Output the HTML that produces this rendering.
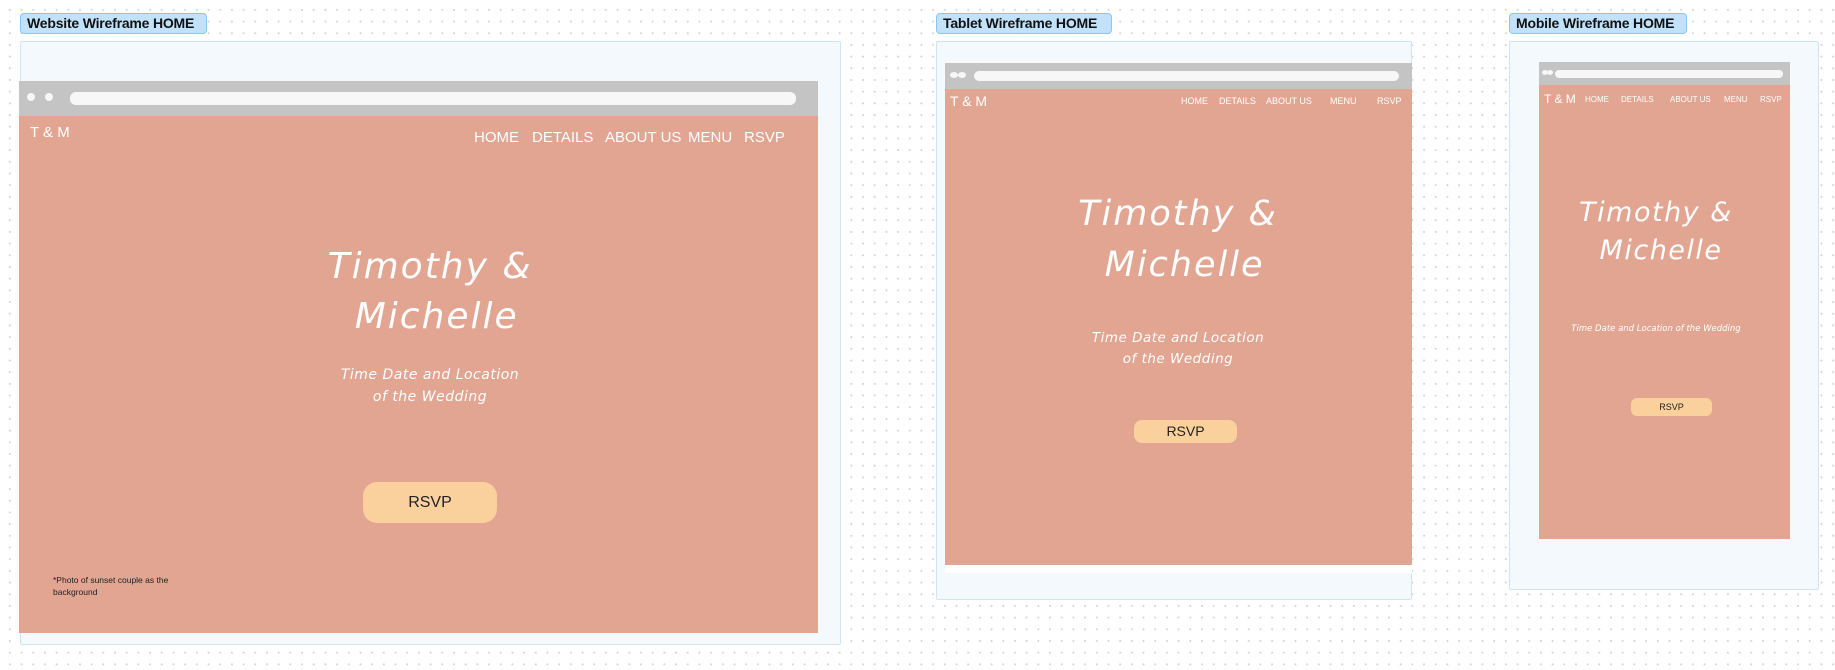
<!DOCTYPE html>
<html><head><meta charset="utf-8"><style>
*{margin:0;padding:0;box-sizing:border-box}
body{width:1835px;height:670px;overflow:hidden;position:relative;background:#fff;
background-image:radial-gradient(circle,#d4d4d4 0.8px,transparent 1.2px);background-size:11.7px 11.7px;background-position:4px 4px;
font-family:"Liberation Sans",sans-serif}
.a{position:absolute}
.frame{position:absolute;background:#f4f9fe;border:1px solid #cfe5f6;border-radius:2px}
.label{position:absolute;background:#c2e1fa;border:1px solid #8fc4ec;border-radius:4px;font-size:14px;color:#111;height:21px;line-height:19px;padding-left:6px;font-weight:bold;letter-spacing:-0.2px}
.bar{position:absolute;background:#c4c4c4}
.pink{position:absolute;background:#e1a592}
.url{position:absolute;background:#f7f7f7;border-radius:6px}
.dot{position:absolute;background:#f7f7f7;border-radius:50%}
.w{position:absolute;color:#fff;white-space:nowrap}
.s{position:absolute;color:#fff;font-style:italic;text-align:center;white-space:nowrap;font-family:"DejaVu Sans","Liberation Sans",sans-serif;font-weight:normal}
.btn{position:absolute;background:#fad09c;color:#222;text-align:center}
</style></head><body>

<!-- Website -->
<div class="label" style="left:20px;top:13px;width:187px">Website Wireframe HOME</div>
<div class="frame" style="left:20px;top:41px;width:821px;height:604px"></div>
<div class="bar" style="left:19px;top:81px;width:799px;height:35px"></div>
<div class="dot" style="left:27px;top:93px;width:8px;height:8px"></div>
<div class="dot" style="left:45px;top:93px;width:8px;height:8px"></div>
<div class="url" style="left:70px;top:92px;width:726px;height:13px"></div>
<div class="pink" style="left:19px;top:116px;width:799px;height:517px"></div>
<div class="w" style="left:30px;top:124px;font-size:15px">T &amp; M</div>
<div class="w" style="left:474px;top:129px;font-size:15px">HOME</div>
<div class="w" style="left:532px;top:129px;font-size:15px">DETAILS</div>
<div class="w" style="left:605px;top:129px;font-size:15px">ABOUT US</div>
<div class="w" style="left:688px;top:129px;font-size:15px">MENU</div>
<div class="w" style="left:744px;top:129px;font-size:15px">RSVP</div>
<div class="s" style="left:300px;top:242px;width:260px;font-size:36px;line-height:50px;letter-spacing:2px">Timothy &amp;<br>&nbsp;Michelle</div>
<div class="s" style="left:300px;top:364px;width:260px;font-size:14px;line-height:22px;letter-spacing:0.5px">Time Date and Location<br>of the Wedding</div>
<div class="btn" style="left:363px;top:482px;width:134px;height:41px;border-radius:14px;font-size:16px;line-height:41px">RSVP</div>
<div class="a" style="left:53px;top:574px;font-size:8.5px;line-height:12px;color:#222">*Photo of sunset couple as the<br>background</div>

<!-- Tablet -->
<div class="label" style="left:936px;top:13px;width:176px">Tablet Wireframe HOME</div>
<div class="frame" style="left:936px;top:41px;width:476px;height:559px"></div>
<div class="bar" style="left:945px;top:63px;width:467px;height:26px"></div>
<div class="dot" style="left:950px;top:72px;width:8px;height:6px"></div>
<div class="dot" style="left:958px;top:72px;width:8px;height:6px"></div>
<div class="url" style="left:974px;top:71px;width:425px;height:10px"></div>
<div class="pink" style="left:945px;top:89px;width:467px;height:476px"></div>
<div class="a" style="left:945px;top:565px;width:467px;height:8px;background:#fff"></div>
<div class="w" style="left:950px;top:93px;font-size:14px">T &amp; M</div>
<div class="w" style="left:1181px;top:96px;font-size:9px">HOME</div>
<div class="w" style="left:1219px;top:96px;font-size:9px">DETAILS</div>
<div class="w" style="left:1266px;top:96px;font-size:9px">ABOUT US</div>
<div class="w" style="left:1330px;top:96px;font-size:9px">MENU</div>
<div class="w" style="left:1377px;top:96px;font-size:9px">RSVP</div>
<div class="s" style="left:1048px;top:189px;width:260px;font-size:35px;line-height:51px;letter-spacing:2px">Timothy &amp;<br>&nbsp;Michelle</div>
<div class="s" style="left:1048px;top:328px;width:260px;font-size:13.5px;line-height:21px;letter-spacing:0.5px">Time Date and Location<br>of the Wedding</div>
<div class="btn" style="left:1134px;top:420px;width:103px;height:23px;border-radius:8px;font-size:14px;line-height:23px">RSVP</div>

<!-- Mobile -->
<div class="label" style="left:1509px;top:13px;width:178px">Mobile Wireframe HOME</div>
<div class="frame" style="left:1509px;top:41px;width:310px;height:549px"></div>
<div class="bar" style="left:1539px;top:62px;width:251px;height:23px"></div>
<div class="dot" style="left:1542px;top:70px;width:6px;height:5px"></div>
<div class="dot" style="left:1547px;top:70px;width:6px;height:5px"></div>
<div class="url" style="left:1555px;top:70px;width:228px;height:8px"></div>
<div class="pink" style="left:1539px;top:85px;width:251px;height:454px"></div>
<div class="w" style="left:1544px;top:92px;font-size:12px">T &amp; M</div>
<div class="w" style="left:1585px;top:95px;font-size:8px">HOME</div>
<div class="w" style="left:1621px;top:95px;font-size:8px">DETAILS</div>
<div class="w" style="left:1670px;top:95px;font-size:8px">ABOUT US</div>
<div class="w" style="left:1724px;top:95px;font-size:8px">MENU</div>
<div class="w" style="left:1760px;top:95px;font-size:8px">RSVP</div>
<div class="s" style="left:1556px;top:194px;width:200px;font-size:27px;line-height:38px;letter-spacing:1.5px">Timothy &amp;<br>&nbsp;Michelle</div>
<div class="s" style="left:1556px;top:323px;width:200px;font-size:8.5px;line-height:12px">Time Date and Location of the Wedding</div>
<div class="btn" style="left:1631px;top:398px;width:81px;height:18px;border-radius:6px;font-size:9px;line-height:18px">RSVP</div>

</body></html>
